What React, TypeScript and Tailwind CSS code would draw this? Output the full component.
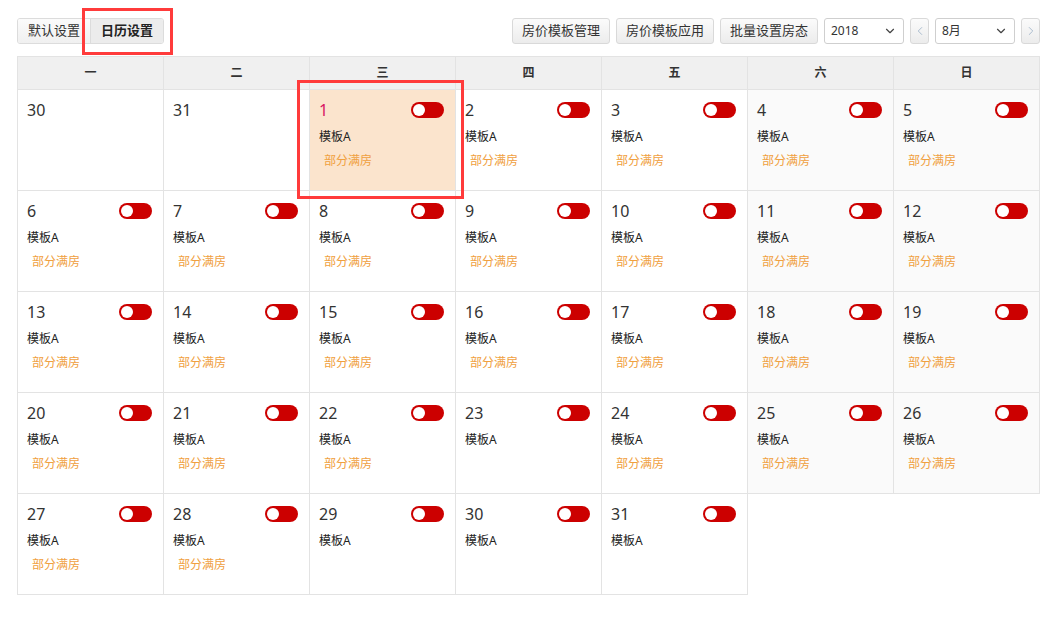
import { ChevronDown, ChevronLeft, ChevronRight } from 'lucide-react';

const FONT = { fontFamily: '"Noto Sans", "Noto Sans CJK SC", sans-serif' };

const weekdays = ['一', '二', '三', '四', '五', '六', '日'];

interface Day {
  day: number;
  inMonth: boolean;
  full: boolean;
}

// August 2018, starting Monday Jul 30
const days: Day[] = [
  { day: 30, inMonth: false, full: false },
  { day: 31, inMonth: false, full: false },
  ...Array.from({ length: 31 }, (_, i) => {
    const d = i + 1;
    return { day: d, inMonth: true, full: ![23, 29, 30, 31].includes(d) };
  }),
];

function Toggle() {
  return (
    <div className="w-[33px] h-[16px] rounded-full bg-[#cc0000] flex items-center pl-[2px]">
      <div className="w-[12px] h-[12px] rounded-full bg-white" />
    </div>
  );
}

function ToolButton({ children }: { children: React.ReactNode }) {
  return (
    <button className="h-[26px] px-[9px] text-[13px] text-[#333] border border-[#d9d9d9] rounded-[3px] bg-gradient-to-b from-[#fbfbfb] to-[#ececec]">
      {children}
    </button>
  );
}

function Select({ value, width }: { value: string; width: string }) {
  return (
    <div className={`${width} h-[26px] border border-[#cfcfcf] rounded-[3px] bg-white flex items-center justify-between pl-[6px] pr-[6px] text-[12px] text-[#333]`}>
      <span>{value}</span>
      <ChevronDown size={14} strokeWidth={2} className="text-[#444]" />
    </div>
  );
}

function NavButton({ dir }: { dir: 'left' | 'right' }) {
  return (
    <button className="w-[19px] h-[26px] border border-[#d9d9d9] rounded-[3px] bg-gradient-to-b from-[#fbfbfb] to-[#ececec] flex items-center justify-center">
      {dir === 'left' ? (
        <ChevronLeft size={14} strokeWidth={1.5} className="text-[#9fb3c8]" />
      ) : (
        <ChevronRight size={14} strokeWidth={1.5} className="text-[#9fb3c8]" />
      )}
    </button>
  );
}

function DayCell({ d, col }: { d: Day; col: number }) {
  const highlighted = d.inMonth && d.day === 1;
  const weekend = col >= 5;
  const bg = highlighted ? 'bg-[#fbe4cd]' : weekend ? 'bg-[#fafafa]' : 'bg-white';
  return (
    <div className={`h-[101px] border-r border-b border-[#e3e3e3] ${bg}`}>
      <div className="pl-[9px] pr-[11px] pt-[11px]">
        <div className="flex items-center justify-between h-[18px]">
          <span className={`text-[16px] leading-[18px] ${highlighted ? 'text-[#d81462]' : 'text-[#333]'}`}>{d.day}</span>
          {d.inMonth && <Toggle />}
        </div>
        {d.inMonth && (
          <>
            <div className="text-[12px] leading-[14px] text-[#222] mt-[11px]">模板A</div>
            {d.full && <div className="text-[12px] leading-[14px] text-[#f0a040] mt-[10px] pl-[5px]">部分满房</div>}
          </>
        )}
      </div>
    </div>
  );
}

export default function App() {
  return (
    <div className="relative w-[1052px] h-[629px] bg-white" style={FONT}>
      <div className="ml-[17px] w-[1023px] pt-[18px]">
        {/* toolbar */}
        <div className="flex items-center justify-between h-[26px]">
          <div className="flex h-[26px] border border-[#dcdcdc] rounded-[3px] overflow-hidden">
            <button className="px-[10px] text-[13px] text-[#333] bg-gradient-to-b from-[#fbfbfb] to-[#f0f0f0] border-r border-[#dcdcdc]">默认设置</button>
            <button className="px-[10px] text-[13px] font-bold text-[#222] bg-[#ececec]">日历设置</button>
          </div>
          <div className="flex items-center gap-[6px]">
            <ToolButton>房价模板管理</ToolButton>
            <ToolButton>房价模板应用</ToolButton>
            <ToolButton>批量设置房态</ToolButton>
            <Select value="2018" width="w-[80px]" />
            <NavButton dir="left" />
            <Select value="8月" width="w-[80px]" />
            <NavButton dir="right" />
          </div>
        </div>

        {/* calendar */}
        <div className="mt-[12px] grid grid-cols-7 border-l border-[#e3e3e3]">
          {weekdays.map((w) => (
            <div key={w} className="h-[34px] flex items-center justify-center bg-[#f0f0f0] border-t border-r border-b border-[#e3e3e3] text-[12px] font-bold text-[#333]">
              {w}
            </div>
          ))}
          {days.map((d, i) => (
            <DayCell key={i} d={d} col={i % 7} />
          ))}
        </div>
      </div>

      {/* annotation boxes */}
      <div className="absolute left-[82px] top-[8px] w-[91px] h-[47px] border-[3px] border-[#ff3b3b]" />
      <div className="absolute left-[297px] top-[80px] w-[167px] h-[119px] border-[3px] border-[#ff3b3b]" />
    </div>
  );
}
